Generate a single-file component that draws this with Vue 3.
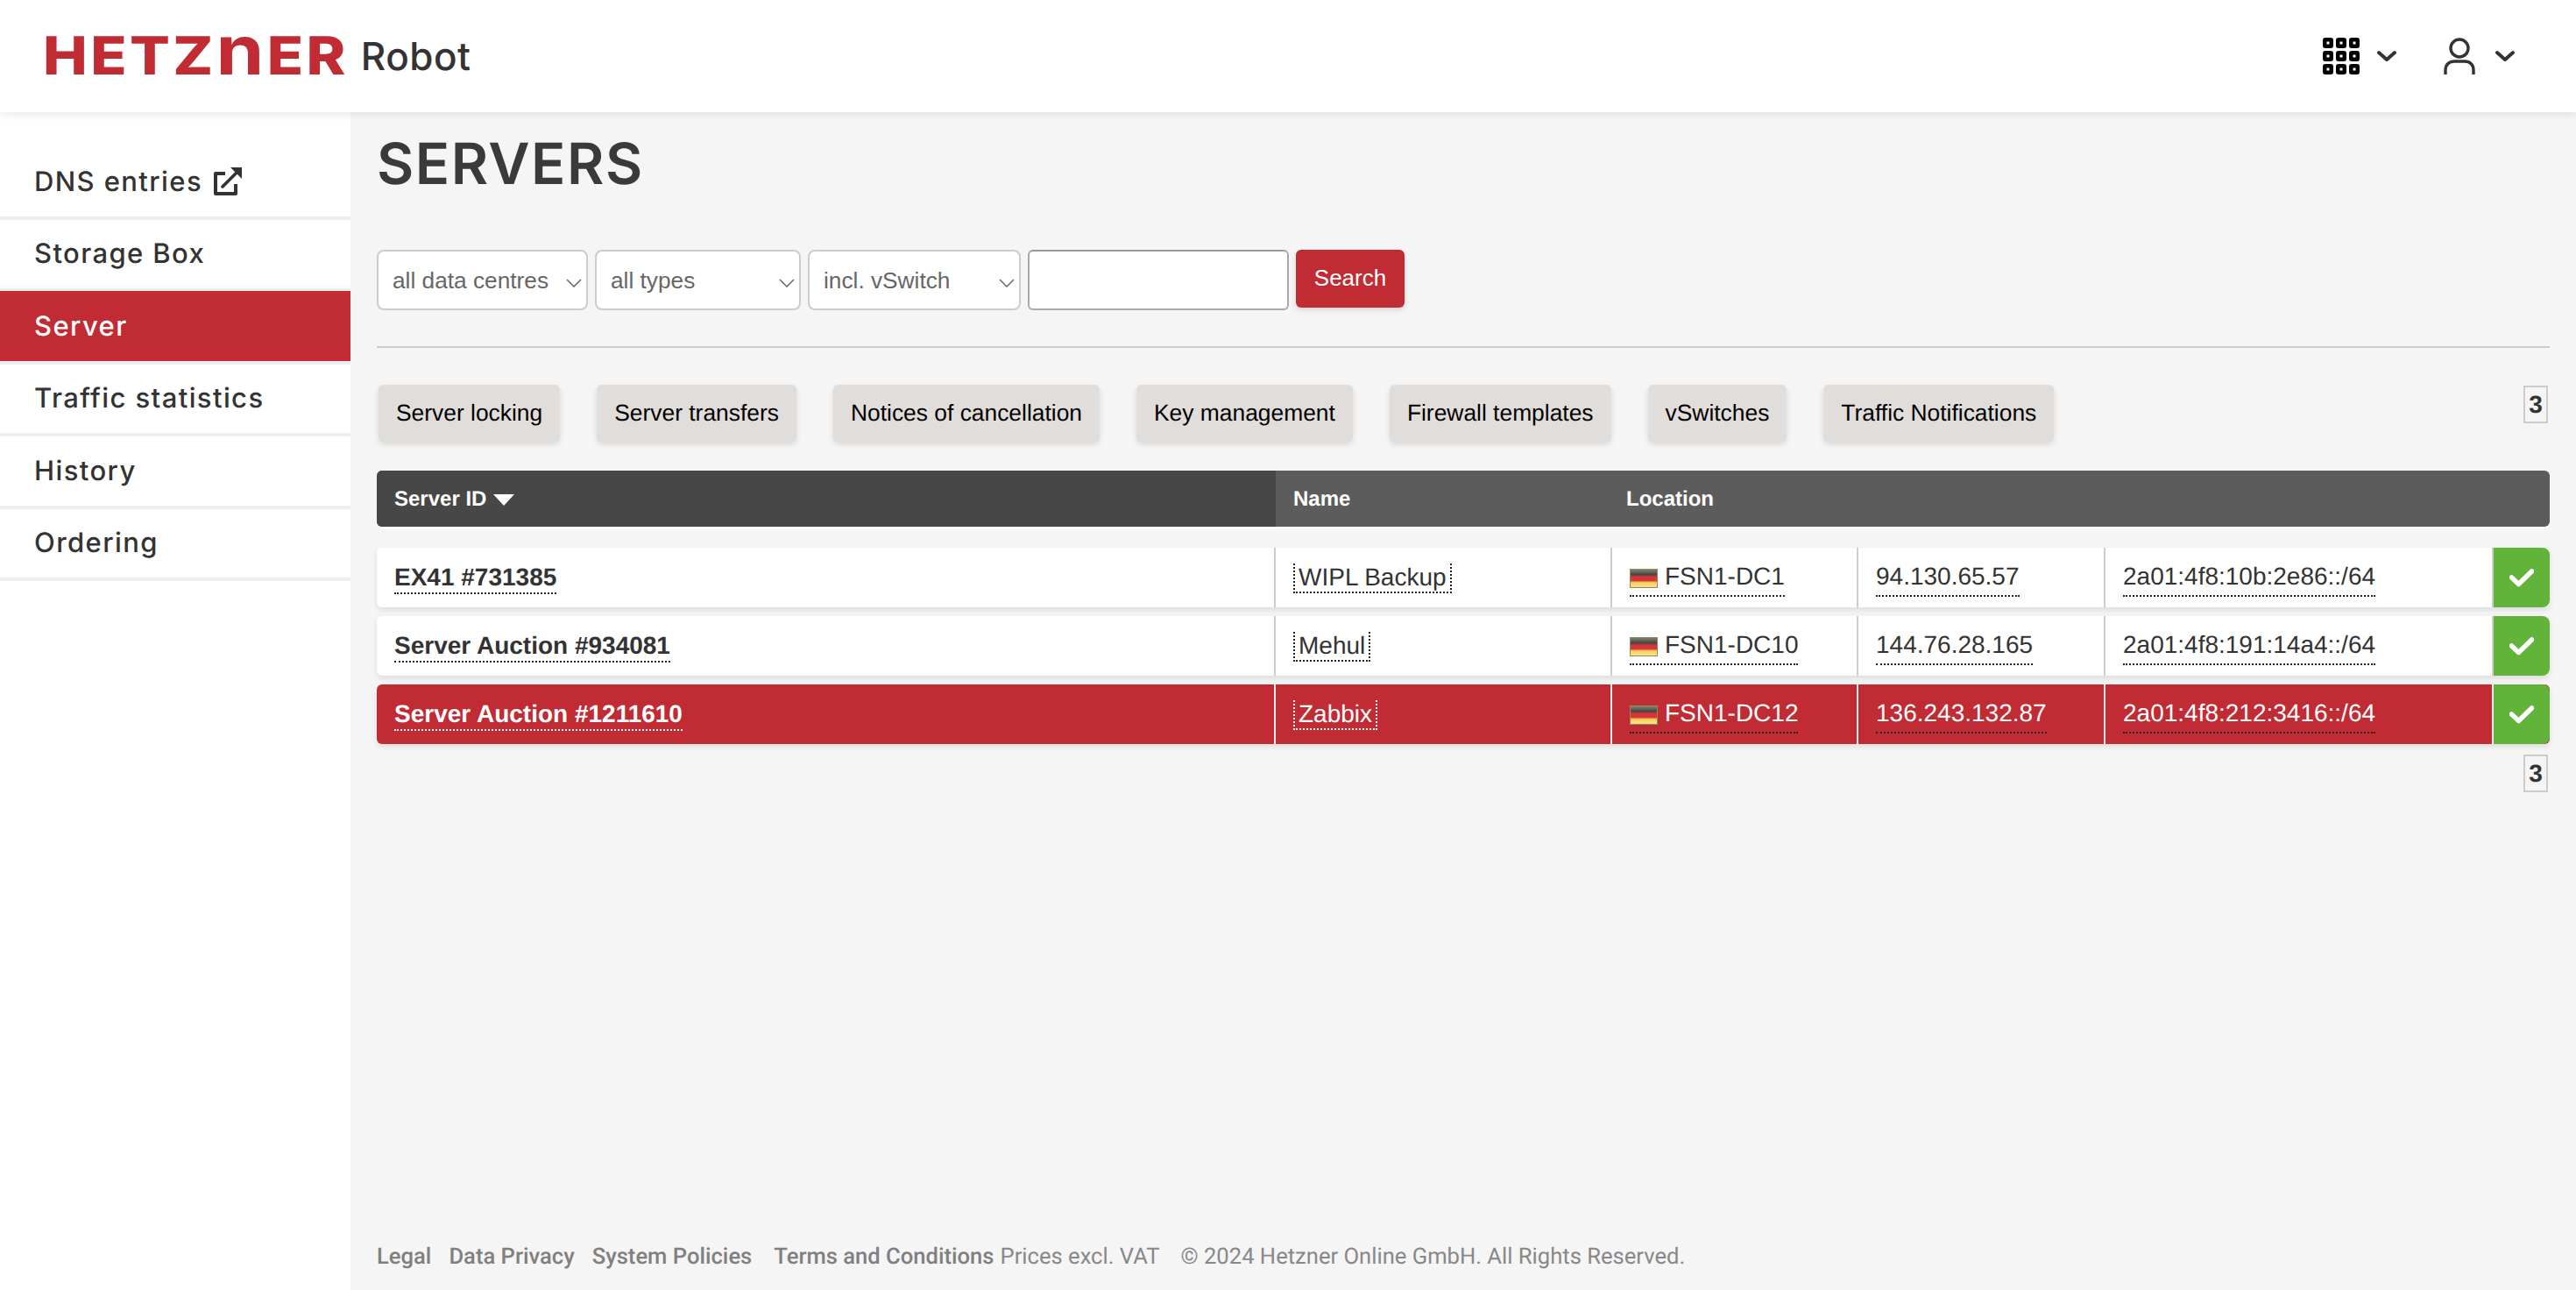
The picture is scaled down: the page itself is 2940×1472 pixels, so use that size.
<template>
  <div class="page">
    <header class="topbar">
      <div class="logo">HETZ<span class="logo-n">N</span>ER</div>
      <div class="product">Robot</div>
      <div class="top-actions">
        <div class="top-action">
          <svg class="apps" width="42" height="42" viewBox="0 0 42 42">
            <g v-for="y in [0, 15, 30]" :key="y">
              <g v-for="x in [0, 15, 30]" :key="x">
                <rect :x="x" :y="y" width="12" height="12" rx="3" fill="#000" />
                <rect :x="x + 4.5" :y="y + 4.5" width="3" height="3" fill="#fff" />
              </g>
            </g>
          </svg>
          <svg class="chev" width="22" height="14" viewBox="0 0 22 14"><path d="M2 3l9 8 9-8" fill="none" stroke="#333" stroke-width="4" stroke-linecap="round" stroke-linejoin="round" /></svg>
        </div>
        <div class="top-action">
          <svg class="user" width="36" height="42" viewBox="0 0 36 42">
            <circle cx="18" cy="12" r="10" fill="none" stroke="#333" stroke-width="3.4" />
            <path d="M2 42v-5c0-6 4-10 10-10h12c6 0 10 4 10 10v5" fill="none" stroke="#333" stroke-width="3.4" />
          </svg>
          <svg class="chev" width="22" height="14" viewBox="0 0 22 14"><path d="M2 3l9 8 9-8" fill="none" stroke="#333" stroke-width="4" stroke-linecap="round" stroke-linejoin="round" /></svg>
        </div>
      </div>
    </header>

    <div class="body-wrap">
      <nav class="sidebar">
        <a v-for="n in nav" :key="n.label" class="nav-item" :class="{ active: n.active }">
          {{ n.label }}
          <svg v-if="n.ext" class="ext" width="33" height="33" viewBox="0 0 33 33">
            <path d="M13 7H2v23h23V19" fill="none" stroke="#333" stroke-width="4" stroke-linejoin="round" />
            <path d="M10 22L27 5" fill="none" stroke="#333" stroke-width="3.6" stroke-linecap="round" />
            <path d="M19 0h13v13z" fill="#333" />
          </svg>
        </a>
      </nav>

      <main class="content">
        <h1>SERVERS</h1>

        <form class="filters" @submit.prevent>
          <div v-for="s in selects" :key="s.label" class="select-wrap" :style="{ width: s.width + 'px' }">
            <select class="select"><option>{{ s.label }}</option></select>
            <svg class="select-arrow" width="18" height="10" viewBox="0 0 18 10"><path d="M1 1l8 8 8-8" fill="none" stroke="#666" stroke-width="1.500" /></svg>
          </div>
          <input class="search-input" type="text" />
          <button class="search-btn" type="submit">Search</button>
        </form>

        <hr class="rule" />

        <div class="toolbar">
          <div class="actions">
            <a v-for="a in actions" :key="a" class="action">{{ a }}</a>
          </div>
          <span class="pager">3</span>
        </div>

        <div class="table-head">
          <div class="th th-sorted">Server ID <span class="sort"></span></div>
          <div class="th">Name</div>
          <div class="th">Location</div>
        </div>

        <div class="rows">
          <div v-for="r in servers" :key="r.id" class="row" :class="{ selected: r.selected }">
            <div class="cell"><a class="link id-link">{{ r.id }}</a></div>
            <div class="cell"><span class="name-box">{{ r.name }}</span></div>
            <div class="cell">
              <a class="link under dc-link">
                <span class="flag"></span>{{ r.dc }}
              </a>
            </div>
            <div class="cell"><a class="link under">{{ r.ip }}</a></div>
            <div class="cell"><a class="link under">{{ r.net }}</a></div>
            <div class="status">
              <svg width="28" height="22" viewBox="0 0 28 22"><path d="M2.500 11l8 7.500L25.500 4" fill="none" stroke="#fff" stroke-width="5.500" stroke-linecap="round" stroke-linejoin="round" /></svg>
            </div>
          </div>
        </div>

        <div class="pager-bottom"><span class="pager">3</span></div>

        <footer class="footer">
          <a class="f1">Legal</a>
          <a class="f2">Data Privacy</a>
          <a class="f3">System Policies</a>
          <a class="f4">Terms and Conditions</a>
          <span class="f5">Prices excl. VAT</span>
          <span class="f6">© 2024 Hetzner Online GmbH. All Rights Reserved.</span>
        </footer>
      </main>
    </div>
  </div>
</template>

<script setup>
const nav = [
  { label: 'DNS entries', ext: true },
  { label: 'Storage Box' },
  { label: 'Server', active: true },
  { label: 'Traffic statistics' },
  { label: 'History' },
  { label: 'Ordering' },
]

const selects = [
  { label: 'all data centres', width: 241 },
  { label: 'all types', width: 235 },
  { label: 'incl. vSwitch', width: 243 },
]

const actions = ['Server locking', 'Server transfers', 'Notices of cancellation', 'Key management', 'Firewall templates', 'vSwitches', 'Traffic Notifications']

const servers = [
  { id: 'EX41 #731385', name: 'WIPL Backup', dc: 'FSN1-DC1', ip: '94.130.65.57', net: '2a01:4f8:10b:2e86::/64' },
  { id: 'Server Auction #934081', name: 'Mehul', dc: 'FSN1-DC10', ip: '144.76.28.165', net: '2a01:4f8:191:14a4::/64' },
  { id: 'Server Auction #1211610', name: 'Zabbix', dc: 'FSN1-DC12', ip: '136.243.132.87', net: '2a01:4f8:212:3416::/64', selected: true },
]
</script>

<style>
html, body { margin: 0; background: #f5f5f5; }
</style>

<style scoped>
.page { height: 1472px; display: flex; flex-direction: column; font-family: "Liberation Sans", Arial, sans-serif; color: #333; overflow: hidden; text-rendering: geometricPrecision; }
.topbar { height: 128px; flex: none; background: #fff; display: flex; align-items: center; padding: 0 70px 0 49px; box-shadow: 0 2px 10px rgba(0,0,0,0.1); position: relative; z-index: 2; box-sizing: border-box; }
.logo { font-family: Inter, sans-serif; font-weight: 800; font-size: 60px; line-height: 64px; color: #c12b34; letter-spacing: 3px; transform: scaleX(1.13); transform-origin: left center; margin-right: 36px; }
.logo-n { text-transform: lowercase; font-size: 78px; line-height: 40px; font-weight: 700; letter-spacing: 3px; }
.product { font-family: Inter, sans-serif; font-weight: 500; font-size: 44px; letter-spacing: 0.5px; color: #333; margin-left: 18px; }
.top-actions { margin-left: auto; display: flex; align-items: center; gap: 54px; }
.top-action { display: flex; align-items: center; gap: 20px; }
.top-action + .top-action { gap: 23px; }

.body-wrap { flex: 1; display: flex; min-height: 0; }
.sidebar { width: 400px; flex: none; background: #fff; padding-top: 39px; box-sizing: border-box; }
.nav-item { display: flex; align-items: center; gap: 13px; height: 78.500px; padding: 1px 0 0 39px; box-sizing: content-box; border-bottom: 4px solid #eee; margin-bottom: -1px; font-family: Inter, sans-serif; font-weight: 500; font-size: 31px; letter-spacing: 1.400px; color: #333; }
.nav-item.active { background: #c12b34; color: #fff; }

.content { flex: 1; padding: 0 30px; min-width: 0; display: flex; flex-direction: column; }
h1 { margin: 19px 0 0; font-family: Inter, sans-serif; font-weight: 600; font-size: 65px; line-height: 80px; letter-spacing: 1.500px; color: #3a3a3a; }
.filters { display: flex; align-items: flex-start; gap: 8px; margin-top: 58px; }
.select-wrap { position: relative; }
.select { appearance: none; width: 100%; height: 69px; border: 2px solid #ccc; border-radius: 8px; background: #fff; padding: 0 16px; font-family: inherit; font-size: 26.250px; color: #666; box-sizing: border-box; display: block; }
.select-arrow { position: absolute; right: 7px; top: 33px; }
.search-input { width: 298px; height: 69px; border: 2px solid #aaa; border-top-color: #999; border-radius: 6px; background: #fff; box-sizing: border-box; }
.search-btn { width: 124px; height: 66px; border: none; border-radius: 6px; background: #c12b34; color: #fff; font-family: inherit; font-size: 26px; box-shadow: 0 3px 6px rgba(0,0,0,0.12); padding: 0 0 2px; }
.rule { width: 100%; height: 2px; border: none; background: #ccc; margin: 41px 0 0; }

.toolbar { display: flex; justify-content: space-between; align-items: flex-start; margin-top: 42px; padding-left: 2px; padding-right: 2px; }
.actions { display: flex; gap: 42px; }
.action { height: 65px; display: flex; align-items: center; padding: 0 20px; background: #e0dddb; border-radius: 6px; color: #000; font-size: 26.400px; box-shadow: 0 3px 6px rgba(0,0,0,0.12); }
.pager { display: block; width: 28px; height: 43px; box-sizing: border-box; border: 2px solid #ccc; font-weight: 700; font-size: 28px; line-height: 39px; text-align: center; color: #333; }
.toolbar .pager { margin-top: 1px; }

.table-head { display: grid; grid-template-columns: 1026px 380px 1fr; height: 64px; margin-top: 33px; background: #5c5c5c; border-radius: 6px; overflow: hidden; box-shadow: 0 3px 0 rgba(255,255,255,0.7); }
.th { display: flex; align-items: center; padding: 1px 0 0 20px; color: #fff; font-weight: 700; font-size: 24px; gap: 8px; }
.th-sorted { background: #474747; }
.sort { width: 0; height: 0; border-left: 12px solid transparent; border-right: 12px solid transparent; border-top: 13px solid #fff; margin-top: 2px; }

.rows { display: flex; flex-direction: column; gap: 10px; margin-top: 24px; }
.row { display: grid; grid-template-columns: 1026px 384px 281px 282px 443px 64px; height: 68px; background: #fff; border-radius: 6px; box-shadow: 0 3px 6px rgba(0,0,0,0.1); font-size: 28px; color: #333; }
.row.selected { background: #c12b34; color: #fff; }
.cell { display: flex; align-items: center; padding-left: 20px; border-right: 2px solid #ccc; box-sizing: border-box; min-width: 0; }
.row.selected .cell { border-right-color: #eee; }
.link { border-bottom: 2px dotted #222; line-height: 34px; color: inherit; white-space: nowrap; }
.link.under { padding-bottom: 4px; margin-top: 4px; }
.row.selected .id-link { border-bottom-color: #fff; }
.id-link { font-weight: 700; margin-top: 2px; }
.name-box { border: 2px dotted #222; border-top: none; padding: 0 4px; line-height: 32px; margin-top: 2px; white-space: nowrap; }
.row.selected .name-box { border-color: #fff; }
.dc-link { display: flex; align-items: center; gap: 8px; }
.flag { width: 32px; height: 22px; box-sizing: border-box; border: 1px solid #8d8a5c; background: linear-gradient(#807f76, #46463f 28%, #d8333a 42%, #d8333a 62%, #f5d45a 74%, #f8e08a); display: block; margin-top: 4px; }
.status { background: #62b33a; display: flex; align-items: center; justify-content: center; border-radius: 0 8px 8px 0; }

.pager-bottom { display: flex; justify-content: flex-end; margin-top: 12px; padding-right: 2px; }
.footer { margin-top: auto; padding-bottom: 23px; display: flex; align-items: baseline; font-family: Roboto, sans-serif; font-size: 25.600px; color: #888; white-space: nowrap; }
.footer a { font-weight: 500; color: #808080; }
.f2 { margin-left: 20px; }
.f3 { margin-left: 20px; }
.f4 { margin-left: 25px; }
.f5 { margin-left: 7px; }
.f6 { margin-left: 24px; }
</style>
